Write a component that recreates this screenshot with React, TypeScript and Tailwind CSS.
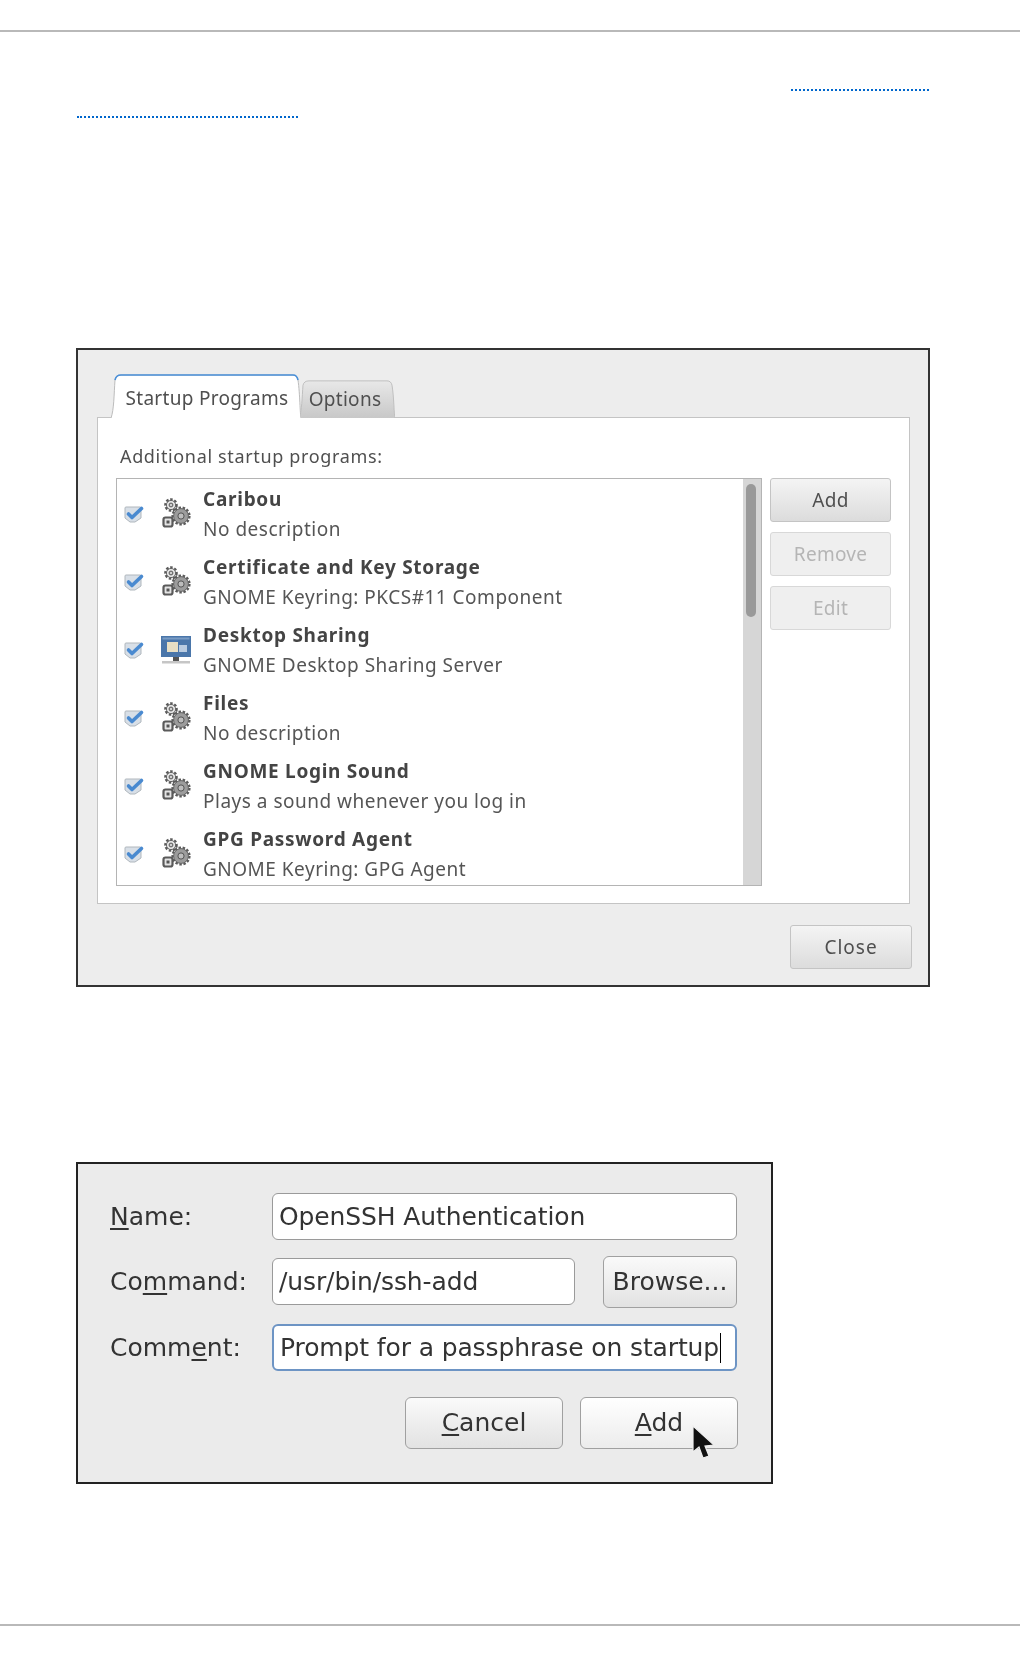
import React from 'react';

const GNOME_FONT = "font-['Noto_Sans','Open_Sans',sans-serif]";

const rows = [
    { title: 'Caribou', sub: 'No description', icon: 'gears' },
    { title: 'Certificate and Key Storage', sub: 'GNOME Keyring: PKCS#11 Component', icon: 'gears' },
    { title: 'Desktop Sharing', sub: 'GNOME Desktop Sharing Server', icon: 'desktop' },
    { title: 'Files', sub: 'No description', icon: 'gears' },
    { title: 'GNOME Login Sound', sub: 'Plays a sound whenever you log in', icon: 'gears' },
    { title: 'GPG Password Agent', sub: 'GNOME Keyring: GPG Agent', icon: 'gears' },
];

const Check = () => (
    <svg width="22" height="20" viewBox="0 0 22 20" className="ml-px shrink-0">
        <path d="M2 4 Q2 3 3 3 L17 3 Q18 3 18 4 L18 14 L12 18 L7 18 L2 14 Z" fill="#d8dfe7" stroke="#b0b7bd" />
        <path d="M5.5 10 L9 13.5 L18.5 4.5" fill="none" stroke="#4a8ad0" strokeWidth="3.6" strokeLinecap="round" strokeLinejoin="round" />
    </svg>
);

const Gear = ({ cx, cy, r, fill, hole }: { cx: number; cy: number; r: number; fill: string; hole: string }) => (
    <g>
        <circle cx={cx} cy={cy} r={r + 0.8} fill="none" stroke="#5a5a5a" strokeWidth="2.8" strokeDasharray="2.4 1.6" />
        <circle cx={cx} cy={cy} r={r} fill={fill} stroke="#666" strokeWidth="1" />
        <circle cx={cx} cy={cy} r={r * 0.42} fill={hole} stroke="#555" strokeWidth="1" />
    </g>
);

const Gears = () => (
    <svg width="32" height="32" viewBox="0 0 32 32" className="shrink-0">
        <Gear cx={11} cy={7} r={4.6} fill="#e4e4e4" hole="#cfcfcf" />
        <rect x="3.5" y="19.5" width="9" height="9" rx="2" fill="#e4e4e4" stroke="#5a5a5a" strokeWidth="2.2" />
        <rect x="6.5" y="22.5" width="3" height="3" fill="#555" />
        <Gear cx={21} cy={18} r={7.4} fill="#9c9c9c" hole="#bdbdbd" />
    </svg>
);

const Desktop = () => (
    <svg width="32" height="32" viewBox="0 0 32 32" className="shrink-0">
        <rect x="1" y="2" width="30" height="21" fill="#4a76aa" />
        <rect x="2.5" y="3.5" width="27" height="2" fill="#7a9cc4" />
        <rect x="7" y="8" width="11" height="10" fill="#e8dfc4" />
        <rect x="19" y="11" width="8" height="7" fill="#b9cbe0" />
        <rect x="13" y="23" width="6" height="4" fill="#555" />
        <rect x="2" y="27" width="28" height="2.5" fill="#c6c6c6" />
    </svg>
);

const GtkButton = ({ label, disabled, className }: { label: string; disabled?: boolean; className: string }) => (
    <div
        className={`flex items-center justify-center rounded-[3px] border pt-px text-[19px] tracking-[0.25px] ${GNOME_FONT} ${className} ${
            disabled
                ? 'border-[#d8d8d8] bg-[#efefef] text-[#b5b5b5]'
                : 'border-[#c4c4c4] bg-linear-to-b from-[#f4f4f4] to-[#dcdcdc] text-[#4f4f4f]'
        }`}
    >
        {label}
    </div>
);

const Tab = ({ label, active, width }: { label: string; active?: boolean; width: number }) => (
    <div className={`relative flex items-center justify-center ${active ? 'z-10 h-[44px] pl-[2px] pt-[5px]' : '-ml-[2px] h-[38px] pr-[4px]'}`} style={{ width }}>
        <svg className="absolute inset-0 h-full w-full" viewBox={`0 0 ${width} 44`} preserveAspectRatio="none">
            <defs>
                <linearGradient id="inactiveTab" x1="0" y1="0" x2="0" y2="1">
                    <stop offset="0" stopColor="#e8e8e8" />
                    <stop offset="1" stopColor="#c8c8c8" />
                </linearGradient>
            </defs>
            <path
                d={`M0 44 C3 36 3 20 4 6 Q5 1 10 1 L${width - 8} 1 Q${width - 4} 1 ${width - 3} 6 C${width - 1} 20 ${width - 1} 40 ${width} 44`}
                fill={active ? '#fff' : 'url(#inactiveTab)'}
                stroke="#bcbcbc"
            />
            {active && <path d={`M4 6 Q5 1 10 1 L${width - 8} 1 Q${width - 4} 1 ${width - 3} 6`} fill="none" stroke="#4a90d9" strokeWidth="1.6" />}
        </svg>
        <span className={`relative text-[19px] tracking-[0.3px] text-[#4f4f4f] ${GNOME_FONT}`}>{label}</span>
    </div>
);

const u = (s: string) => <span className="underline decoration-2 underline-offset-[3px]">{s}</span>;

const inputBase = 'flex items-center rounded-[6px] bg-white px-[6px] h-[47px] tracking-[-0.12px]';
const dialogButton = 'flex h-[52px] items-center justify-center rounded-[6px] border border-[#a0a0a0]';

const App: React.FC = () => {
    return (
        <div className="flex h-[1656px] w-[1020px] flex-col overflow-hidden bg-white pt-[30px]">
            <div className="h-[2px] bg-[#b9b9b9]" />

            <div className="mt-[57px] flex justify-end pr-[91px]">
                <div className="w-[138px] border-b-2 border-dotted border-[#0066cc]" />
            </div>
            <div className="mt-[25px] pl-[77px]">
                <div className="w-[221px] border-b-2 border-dotted border-[#0066cc]" />
            </div>

            {/* startup programs dialog */}
            <div className="mx-[76px] mt-[230px] h-[639px] w-[854px] border-2 border-[#333] bg-[#ededed] px-[19px] pt-[24px] blur-[0.6px]">
                <div className="flex items-end pl-[14px]">
                    <Tab label="Startup Programs" active width={190} />
                    <Tab label="Options" width={96} />
                </div>
                <div className="-mt-px h-[487px] w-[813px] border border-[#c4c4c4] bg-white pl-[18px] pt-[14px]">
                    <div className={`h-[46px] pl-[4px] pt-[2px] text-[18px] leading-[44px] tracking-[0.65px] text-[#4f4f4f] ${GNOME_FONT}`}>Additional startup programs:</div>
                    <div className="flex gap-[8px]">
                        <div className="flex h-[408px] w-[646px] overflow-hidden border border-[#b4b4b4] bg-white">
                            <div className="flex-1 overflow-hidden pt-px">
                                {rows.map(row => (
                                    <div key={row.title} className="flex h-[68px] shrink-0 items-center pl-[5px]">
                                        <Check />
                                        <div className="ml-[15px] w-[32px]">{row.icon === 'gears' ? <Gears /> : <Desktop />}</div>
                                        <div className={`ml-[11px] text-[19px] leading-[30px] text-[#555] ${GNOME_FONT}`}>
                                            <div className="font-bold tracking-[0.72px] text-[#444]">{row.title}</div>
                                            <div className="tracking-[0.5px]">{row.sub}</div>
                                        </div>
                                    </div>
                                ))}
                            </div>
                            <div className="w-[18px] shrink-0 bg-[#d6d6d6] pl-[3px] pt-[5px]">
                                <div className="h-[133px] w-[10px] rounded-[5px] bg-[#999]" />
                            </div>
                        </div>
                        <div className="flex flex-col gap-[10px]">
                            <GtkButton label="Add" className="h-[44px] w-[121px]" />
                            <GtkButton label="Remove" disabled className="h-[44px] w-[121px]" />
                            <GtkButton label="Edit" disabled className="h-[44px] w-[121px]" />
                        </div>
                    </div>
                </div>
                <div className="mt-[21px] flex justify-end">
                    <GtkButton label="Close" className="-mr-[3px] h-[44px] w-[122px] tracking-[1px]" />
                </div>
            </div>

            {/* add startup program dialog */}
            <div className="relative mx-[76px] mt-[175px] h-[322px] w-[697px] border-2 border-[#222] bg-[#ebebeb] pl-[32px] pt-[29px] font-['DejaVu_Sans',sans-serif] text-[25px] text-[#333] blur-[0.5px]">
                <div className="flex h-[47px] items-center">
                    <div className="w-[162px]">{u('N')}ame:</div>
                    <div className={`${inputBase} w-[465px] border border-[#9a9a9a]`}>OpenSSH Authentication</div>
                </div>
                <div className="mt-[18px] flex h-[47px] items-center">
                    <div className="w-[162px]">Co{u('m')}mand:</div>
                    <div className={`${inputBase} w-[303px] border border-[#9a9a9a]`}>/usr/bin/ssh-add</div>
                    <div className={`${dialogButton} ml-[28px] w-[134px] bg-linear-to-b from-[#fafafa] to-[#e2e2e2]`}>Browse...</div>
                </div>
                <div className="mt-[19px] flex h-[47px] items-center">
                    <div className="w-[162px]">Comm{u('e')}nt:</div>
                    <div className={`${inputBase} w-[465px] border-2 border-[#6d94c4]`}>
                        Prompt for a passphrase on startup
                        <span className="ml-px h-[30px] w-px bg-black" />
                    </div>
                </div>
                <div className="mt-[26px] flex gap-[17px] pl-[295px]">
                    <div className={`${dialogButton} w-[158px] bg-linear-to-b from-[#fafafa] to-[#e2e2e2]`}><span>{u('C')}ancel</span></div>
                    <div className={`${dialogButton} w-[158px] bg-linear-to-b from-white to-[#ececec]`}><span>{u('A')}dd</span></div>
                </div>
                <svg className="absolute left-[613px] top-[261px]" width="26" height="36" viewBox="0 0 26 36">
                    <path d="M2 1 L2 27 L8 22 L12 33 L18 31 L14 21 L23 20 Z" fill="#111" stroke="#eee" strokeWidth="1.2" />
                </svg>
            </div>

            <div className="mt-[140px] h-[2px] bg-[#b9b9b9]" />
        </div>
    );
};

export default App;
